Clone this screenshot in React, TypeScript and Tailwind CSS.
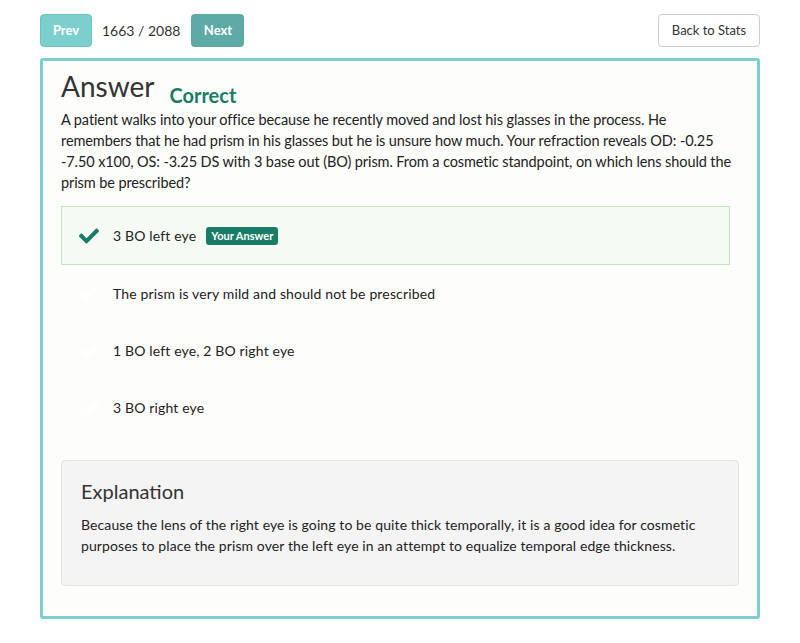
const options = [
  { text: "3 BO left eye", selected: true },
  { text: "The prism is very mild and should not be prescribed", selected: false },
  { text: "1 BO left eye, 2 BO right eye", selected: false },
  { text: "3 BO right eye", selected: false },
];

function CheckIcon({ className }: { className: string }) {
  return (
    <svg viewBox="0 0 512 512" className={className} fill="currentColor">
      <path d="M173.898 439.404l-166.4-166.4c-9.997-9.997-9.997-26.206 0-36.204l36.203-36.204c9.997-9.998 26.207-9.998 36.204 0L192 312.69 432.095 72.596c9.997-9.997 26.207-9.997 36.204 0l36.203 36.204c9.997 9.997 9.997 26.206 0 36.204l-294.4 294.401c-9.998 9.997-26.207 9.997-36.204-.001z" />
    </svg>
  );
}

export default function App() {
  return (
    <div
      className="min-h-[643px] bg-white px-10 pt-[14px] text-[#333]"
      style={{ fontFamily: "Lato, 'Open Sans', sans-serif" }}
    >
      <div className="flex items-center justify-between">
        <div className="flex items-center">
          <button className="h-[33px] w-[52px] rounded border border-[#6cc3c0] bg-[#7ccfcc] text-[13px] font-bold text-white">
            Prev
          </button>
          <span className="ml-[10px] mr-[11px] text-[14px] text-[#333]">1663 / 2088</span>
          <button className="h-[33px] w-[53px] rounded bg-[#5eaaa6] text-[13px] font-bold text-white">
            Next
          </button>
        </div>
        <button className="h-[33px] w-[102px] rounded border border-[#ccc] bg-white text-[13px] text-[#333]">
          Back to Stats
        </button>
      </div>

      <div className="mt-[11px] h-[561px] rounded-[3px] border-[3px] border-[#7ccfcc] bg-[#fdfdfb] px-[18px] pt-[6px]">
        <div className="flex items-end">
          <h1 className="text-[28px] leading-[38px] text-[#333]">Answer</h1>
          <span className="ml-[15px] text-[20px] font-bold leading-[20px] text-[#197c66]">Correct</span>
        </div>
        <p className="mt-[4px] text-[14.5px] leading-[21px] tracking-[-0.1px] text-[#222]">
          A patient walks into your office because he recently moved and lost his glasses in the process. He
          remembers that he had prism in his glasses but he is unsure how much. Your refraction reveals OD: -0.25
          -7.50 x100, OS: -3.25 DS with 3 base out (BO) prism. From a cosmetic standpoint, on which lens should the
          prism be prescribed?
        </p>

        <div className="mr-[9px] mt-[13px] flex flex-col">
          {options.map((o) => (
            <div
              key={o.text}
              className={
                o.selected
                  ? "flex h-[59px] items-center border border-[#c5e5bf] bg-[#f5faf3]"
                  : "flex h-[57px] items-center border border-transparent"
              }
            >
              <div className="flex w-[51px] justify-center pl-[3px]">
                <CheckIcon
                  className={o.selected ? "h-[20px] w-[20px] text-[#197c66]" : "h-[20px] w-[20px] text-white"}
                />
              </div>
              <span className="text-[14px] tracking-[0.15px] text-[#222]">{o.text}</span>
              {o.selected && (
                <span className="ml-[10px] rounded-[3px] bg-[#197c66] px-[5px] py-[2px] text-[11px] font-bold leading-[14px] text-white">
                  Your Answer
                </span>
              )}
            </div>
          ))}
        </div>

        <div className="mt-[24px] h-[126px] rounded border border-[#e3e3e3] bg-[#f4f4f4] px-[19px] pt-[16px]">
          <h2 className="text-[20px] leading-[28px] text-[#333]">Explanation</h2>
          <p className="mt-[9px] text-[14px] leading-[21px] tracking-[0.1px] text-[#222]">
            Because the lens of the right eye is going to be quite thick temporally, it is a good idea for cosmetic
            purposes to place the prism over the left eye in an attempt to equalize temporal edge thickness.
          </p>
        </div>
      </div>
    </div>
  );
}
